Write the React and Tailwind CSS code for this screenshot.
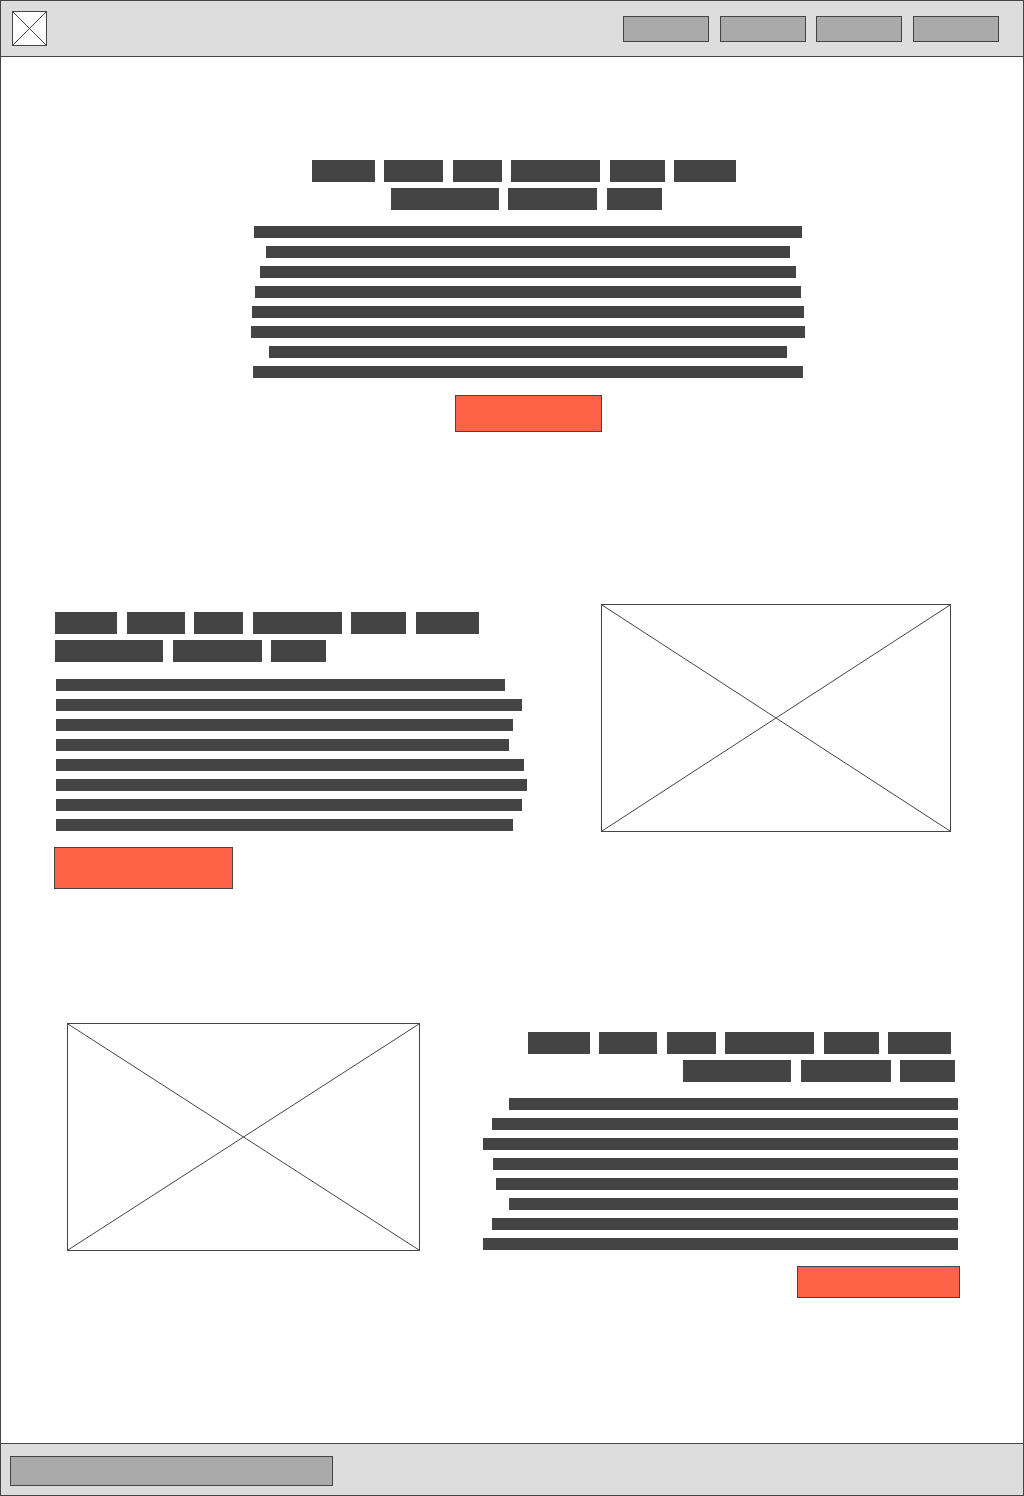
import React from 'react';

// Wireframe placeholder widths, read off the mockup
const heroRow1 = [63, 59, 49, 89, 55, 62];
const heroRow2 = [108, 89, 55];
const heroLines = [548, 524, 536, 546, 552, 554, 518, 550];

const leftRow1 = [62, 58, 49, 89, 55, 63];
const leftRow2 = [108, 89, 55];
const leftLines = [449, 466, 457, 453, 468, 471, 466, 457];

const rightRow1 = [62, 58, 49, 89, 55, 63];
const rightRow2 = [108, 90, 55];
const rightLines = [449, 466, 475, 465, 462, 449, 466, 475];

const Cross = ({ className }) => (
  <div className={`relative border border-[#444] bg-white ${className}`}>
    <svg className="absolute inset-0 h-full w-full" preserveAspectRatio="none" viewBox="0 0 100 100">
      <line x1="0" y1="0" x2="100" y2="100" stroke="#444" strokeWidth="1" vectorEffect="non-scaling-stroke" />
      <line x1="100" y1="0" x2="0" y2="100" stroke="#444" strokeWidth="1" vectorEffect="non-scaling-stroke" />
    </svg>
  </div>
);

const Bar = ({ w, h }) => <div className={`bg-[#444] ${h}`} style={{ width: w }} />;

const HeadingRow = ({ widths, className = '' }) => (
  <div className={`flex gap-[9.5px] ${className}`}>
    {widths.map((w, i) => (
      <Bar key={i} w={w} h="h-[22px]" />
    ))}
  </div>
);

const Lines = ({ widths, align }) => (
  <div className={`flex flex-col gap-[8px] ${align}`}>
    {widths.map((w, i) => (
      <Bar key={i} w={w} h="h-[12px]" />
    ))}
  </div>
);

const CtaButton = ({ className }) => (
  <div className={`border border-[#444] bg-[#ff6347] ${className}`} />
);

export default function App() {
  return (
    <div className="flex h-[1496px] w-[1024px] flex-col border border-[#444] bg-white">
      {/* Top bar */}
      <header className="flex h-[56px] shrink-0 items-center justify-between border-b border-[#444] bg-[#ddd] pl-[11px] pr-[24px]">
        <Cross className="h-[35px] w-[35px]" />
        <nav className="flex gap-[10.6px]">
          {[0, 1, 2, 3].map((i) => (
            <div key={i} className="h-[26px] w-[86px] border border-[#444] bg-[#aaa]" />
          ))}
        </nav>
      </header>

      <main className="flex-1">
        {/* Hero */}
        <section className="mt-[103px] flex flex-col items-center pl-[32px]">
          <HeadingRow widths={heroRow1} className="-ml-[8px]" />
          <HeadingRow widths={heroRow2} className="mt-[6px] -ml-[4px]" />
          <div className="mt-[16px]">
            <Lines widths={heroLines} align="items-center" />
          </div>
          <CtaButton className="mt-[17px] h-[37px] w-[147px]" />
        </section>

        {/* Text left, picture right */}
        <section className="mt-[172px] flex items-start">
          <div className="ml-[54px] flex w-[480px] flex-col pt-[8px]">
            <HeadingRow widths={leftRow1} />
            <HeadingRow widths={leftRow2} className="mt-[6px]" />
            <div className="mt-[17px] pl-[1px]">
              <Lines widths={leftLines} align="items-start" />
            </div>
            <CtaButton className="-ml-[1px] mt-[16px] h-[42px] w-[179px]" />
          </div>
          <Cross className="ml-[66px] h-[228px] w-[350px]" />
        </section>

        {/* Picture left, text right */}
        <section className="mt-[134px] flex items-start justify-between">
          <Cross className="ml-[66px] h-[228px] w-[353px]" />
          <div className="mr-[63px] flex flex-col items-end pt-[9px]">
            <HeadingRow widths={rightRow1} className="mr-[9px]" />
            <HeadingRow widths={rightRow2} className="mr-[5px] mt-[6px]" />
            <div className="mr-[2px] mt-[16px]">
              <Lines widths={rightLines} align="items-end" />
            </div>
            <CtaButton className="mt-[16px] h-[32px] w-[163px]" />
          </div>
        </section>
      </main>

      {/* Bottom bar */}
      <footer className="h-[52px] shrink-0 border-t border-[#444] bg-[#ddd] pl-[9px] pt-[12px]">
        <div className="h-[30px] w-[323px] border border-[#444] bg-[#aaa]" />
      </footer>
    </div>
  );
}
